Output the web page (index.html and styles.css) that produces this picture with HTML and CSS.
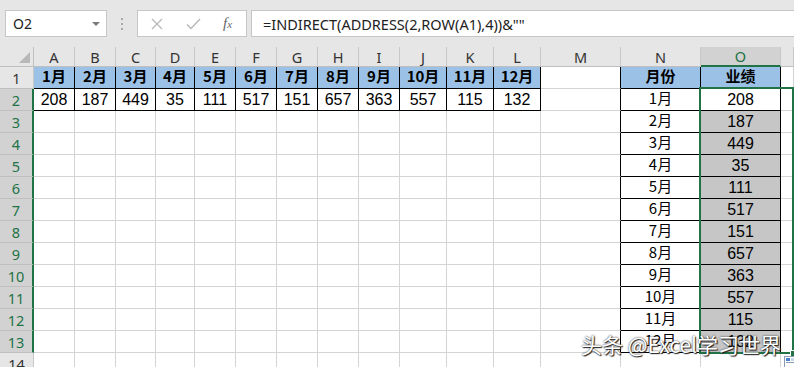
FILE: index.html
```html
<!DOCTYPE html>
<html lang="zh-CN">
<head>
    <meta charset="UTF-8">
    <meta name="viewport" content="width=device-width, initial-scale=1.0">
    <title>INDIRECT 行转列</title>
    <link rel="stylesheet" href="styles.css">
</head>
<body>
    <div class="toolbar">
        <div class="namebox"><span>O2</span><span class="arrow"></span></div>
        <div class="grip"><i></i><i></i><i></i></div>
        <div class="btns">
            <svg class="btn-x" width="12" height="12" viewBox="0 0 12 12"><path d="M1 1L11 11M11 1L1 11" stroke="#b8b8b8" stroke-width="1.3" fill="none"/></svg>
            <svg class="btn-ok" width="15" height="12" viewBox="0 0 15 12"><path d="M1 6.5L5 10.5L14 1" stroke="#b8b8b8" stroke-width="1.4" fill="none"/></svg>
            <span class="fx">f<small>x</small></span>
        </div>
        <div class="formula">=INDIRECT(ADDRESS(2,ROW(A1),4))&amp;""</div>
    </div>

    <div class="sheet">
        <!-- column headers -->
        <div class="corner"><span class="tri"></span></div>
        <div class="ch">A</div><div class="ch">B</div><div class="ch">C</div><div class="ch">D</div>
        <div class="ch">E</div><div class="ch">F</div><div class="ch">G</div><div class="ch">H</div>
        <div class="ch">I</div><div class="ch">J</div><div class="ch">K</div><div class="ch">L</div>
        <div class="ch">M</div><div class="ch">N</div><div class="ch sel">O</div><div class="ch"></div>

        <!-- row 1 -->
        <div class="rh">1</div>
        <div class="c b hd">1月</div><div class="c b hd">2月</div><div class="c b hd">3月</div><div class="c b hd">4月</div>
        <div class="c b hd">5月</div><div class="c b hd">6月</div><div class="c b hd">7月</div><div class="c b hd">8月</div>
        <div class="c b hd">9月</div><div class="c b hd">10月</div><div class="c b hd">11月</div><div class="c b hd">12月</div>
        <div class="c br"></div><div class="c b hd">月份</div><div class="c b hd">业绩</div><div class="c"></div>

        <!-- row 2 -->
        <div class="rh sel">2</div>
        <div class="c b">208</div><div class="c b">187</div><div class="c b">449</div><div class="c b">35</div>
        <div class="c b">111</div><div class="c b">517</div><div class="c b">151</div><div class="c b">657</div>
        <div class="c b">363</div><div class="c b">557</div><div class="c b">115</div><div class="c b">132</div>
        <div class="c br"></div><div class="c b lb">1月</div><div class="c b">208</div><div class="c"></div>

        <!-- rows 3-13 -->
        <div class="rh sel">3</div>
        <div class="c"></div><div class="c"></div><div class="c"></div><div class="c"></div><div class="c"></div><div class="c"></div>
        <div class="c"></div><div class="c"></div><div class="c"></div><div class="c"></div><div class="c"></div><div class="c"></div>
        <div class="c br"></div><div class="c b lb">2月</div><div class="c b g">187</div><div class="c"></div>

        <div class="rh sel">4</div>
        <div class="c"></div><div class="c"></div><div class="c"></div><div class="c"></div><div class="c"></div><div class="c"></div>
        <div class="c"></div><div class="c"></div><div class="c"></div><div class="c"></div><div class="c"></div><div class="c"></div>
        <div class="c br"></div><div class="c b lb">3月</div><div class="c b g">449</div><div class="c"></div>

        <div class="rh sel">5</div>
        <div class="c"></div><div class="c"></div><div class="c"></div><div class="c"></div><div class="c"></div><div class="c"></div>
        <div class="c"></div><div class="c"></div><div class="c"></div><div class="c"></div><div class="c"></div><div class="c"></div>
        <div class="c br"></div><div class="c b lb">4月</div><div class="c b g">35</div><div class="c"></div>

        <div class="rh sel">6</div>
        <div class="c"></div><div class="c"></div><div class="c"></div><div class="c"></div><div class="c"></div><div class="c"></div>
        <div class="c"></div><div class="c"></div><div class="c"></div><div class="c"></div><div class="c"></div><div class="c"></div>
        <div class="c br"></div><div class="c b lb">5月</div><div class="c b g">111</div><div class="c"></div>

        <div class="rh sel">7</div>
        <div class="c"></div><div class="c"></div><div class="c"></div><div class="c"></div><div class="c"></div><div class="c"></div>
        <div class="c"></div><div class="c"></div><div class="c"></div><div class="c"></div><div class="c"></div><div class="c"></div>
        <div class="c br"></div><div class="c b lb">6月</div><div class="c b g">517</div><div class="c"></div>

        <div class="rh sel">8</div>
        <div class="c"></div><div class="c"></div><div class="c"></div><div class="c"></div><div class="c"></div><div class="c"></div>
        <div class="c"></div><div class="c"></div><div class="c"></div><div class="c"></div><div class="c"></div><div class="c"></div>
        <div class="c br"></div><div class="c b lb">7月</div><div class="c b g">151</div><div class="c"></div>

        <div class="rh sel">9</div>
        <div class="c"></div><div class="c"></div><div class="c"></div><div class="c"></div><div class="c"></div><div class="c"></div>
        <div class="c"></div><div class="c"></div><div class="c"></div><div class="c"></div><div class="c"></div><div class="c"></div>
        <div class="c br"></div><div class="c b lb">8月</div><div class="c b g">657</div><div class="c"></div>

        <div class="rh sel">10</div>
        <div class="c"></div><div class="c"></div><div class="c"></div><div class="c"></div><div class="c"></div><div class="c"></div>
        <div class="c"></div><div class="c"></div><div class="c"></div><div class="c"></div><div class="c"></div><div class="c"></div>
        <div class="c br"></div><div class="c b lb">9月</div><div class="c b g">363</div><div class="c"></div>

        <div class="rh sel">11</div>
        <div class="c"></div><div class="c"></div><div class="c"></div><div class="c"></div><div class="c"></div><div class="c"></div>
        <div class="c"></div><div class="c"></div><div class="c"></div><div class="c"></div><div class="c"></div><div class="c"></div>
        <div class="c br"></div><div class="c b lb">10月</div><div class="c b g">557</div><div class="c"></div>

        <div class="rh sel">12</div>
        <div class="c"></div><div class="c"></div><div class="c"></div><div class="c"></div><div class="c"></div><div class="c"></div>
        <div class="c"></div><div class="c"></div><div class="c"></div><div class="c"></div><div class="c"></div><div class="c"></div>
        <div class="c br"></div><div class="c b lb">11月</div><div class="c b g">115</div><div class="c"></div>

        <div class="rh sel">13</div>
        <div class="c"></div><div class="c"></div><div class="c"></div><div class="c"></div><div class="c"></div><div class="c"></div>
        <div class="c"></div><div class="c"></div><div class="c"></div><div class="c"></div><div class="c"></div><div class="c"></div>
        <div class="c br"></div><div class="c b lb">12月</div><div class="c b g">132</div><div class="c"></div>

        <!-- row 14 -->
        <div class="rh">14</div>
        <div class="c"></div><div class="c"></div><div class="c"></div><div class="c"></div><div class="c"></div><div class="c"></div>
        <div class="c"></div><div class="c"></div><div class="c"></div><div class="c"></div><div class="c"></div><div class="c"></div>
        <div class="c"></div><div class="c"></div><div class="c"></div><div class="c"></div>

        <!-- selection O2:O13 -->
        <div class="selection"><span class="handle"></span></div>
    </div>

    <div class="mark">头条 @Excel学习世界</div>

    <svg class="qa" width="12" height="12" viewBox="0 0 12 12">
        <rect x="0.5" y="0.5" width="11" height="11" fill="#fff" stroke="#8a9bb5"/>
        <rect x="2" y="2" width="4" height="3" fill="#4a7fd0"/>
        <rect x="7" y="2" width="3" height="3" fill="#c9d6ea"/>
        <rect x="2" y="6" width="8" height="1" fill="#8a9bb5"/>
    </svg>
</body>
</html>
```

FILE: styles.css
```css
body {
    margin: 0;
    width: 794px;
    height: 367px;
    overflow: hidden;
    position: relative;
    background: #fff;
    font-family: "Liberation Sans", "Noto Sans CJK SC", sans-serif;
}

/* formula bar */
.toolbar {
    height: 47px;
    box-sizing: border-box;
    padding-top: 10px;
    background: #e6e6e6;
    display: flex;
    align-items: flex-start;
    font-family: "Noto Sans", sans-serif;
}
.namebox {
    margin-left: 5px;
    width: 102px;
    height: 27px;
    box-sizing: border-box;
    background: #fff;
    border: 1px solid #c6c6c6;
    display: flex;
    align-items: center;
    justify-content: space-between;
    padding: 0 6px 0 7px;
    font-size: 14px;
    color: #222;
}
.arrow {
    width: 0;
    height: 0;
    border-left: 4px solid transparent;
    border-right: 4px solid transparent;
    border-top: 4px solid #7a7a7a;
}
.grip {
    width: 30px;
    height: 27px;
    display: flex;
    flex-direction: column;
    align-items: center;
    justify-content: center;
    gap: 3px;
}
.grip i {
    width: 2px;
    height: 2px;
    background: #a8a8a8;
}
.btns {
    width: 110px;
    height: 27px;
    box-sizing: border-box;
    background: #fff;
    border: 1px solid #c6c6c6;
    display: flex;
    align-items: center;
    padding-left: 13px;
}
.btn-x { margin-right: 23px; }
.btn-ok { margin-right: 22px; }
.fx {
    font-family: "Liberation Serif", serif;
    font-style: italic;
    font-size: 15px;
    color: #666;
}
.fx small { font-size: 11px; }
.formula {
    flex: 1;
    margin-left: 4px;
    margin-right: -2px;
    height: 27px;
    box-sizing: border-box;
    background: #fff;
    border: 1px solid #c6c6c6;
    padding: 3px 0 0 11px;
    font-size: 14.5px;
    color: #222;
}

/* grid */
.sheet {
    position: relative;
    display: grid;
    grid-template-columns: 34px 41px 41px 40px 39px 41px 41px 41px 41px 41px 47px 47px 47px 80px 80px 80px 1fr;
    grid-template-rows: 20px repeat(14, 22px);
}
.sheet > div {
    box-sizing: border-box;
    display: flex;
    align-items: center;
    justify-content: center;
}
.corner {
    background: #e6e6e6;
    border-right: 1px solid #bfbfbf;
    border-bottom: 1px solid #bfbfbf;
    position: relative;
}
.tri {
    position: absolute;
    right: 3px;
    bottom: 3px;
    width: 0;
    height: 0;
    border-left: 11px solid transparent;
    border-bottom: 11px solid #b8b8b8;
}
.ch, .rh {
    background: #e6e6e6;
    border-right: 1px solid #c8c8c8;
    border-bottom: 1px solid #bfbfbf;
    font-family: "Noto Sans", sans-serif;
    font-size: 14.5px;
    color: #333;
}
.ch.sel {
    background: #d2d2d2;
    color: #217346;
    border-bottom: 2px solid #217346;
}
.rh.sel {
    background: #d2d2d2;
    color: #217346;
    border-right: 2px solid #217346;
}
.c {
    border-right: 1px solid #d4d4d4;
    border-bottom: 1px solid #d4d4d4;
    font-size: 16px;
    color: #000;
}
.b {
    border-right-color: #000;
    border-bottom-color: #000;
}
.br { border-right-color: #000; }
.sheet > .hd, .sheet > .lb {
    font-family: "Noto Sans CJK SC", sans-serif;
    font-size: 15px;
    line-height: 1;
    padding-bottom: 4px;
}
.hd {
    background: #9bc2e6;
    font-weight: bold;
}
.g { background: #c6c6c6; }

/* absolutely placed over grid area O2:O13, so it stays out of auto-placement */
.sheet > .selection {
    position: absolute;
    grid-column: 16;
    grid-row: 3 / 15;
    top: -2px;
    left: -2px;
    right: 0;
    bottom: -1px;
    border: 2px solid #217346;
}
.handle {
    position: absolute;
    right: -5px;
    bottom: -5px;
    width: 5px;
    height: 5px;
    background: #217346;
    border: 1px solid #fff;
}

/* watermark */
.mark {
    position: absolute;
    left: 581px;
    top: 329px;
    font-family: "Noto Sans CJK SC", sans-serif;
    font-size: 21px;
    color: #fff;
    text-shadow: 0 0 2px #222, 1px 1px 1px #222;
    white-space: nowrap;
}
.qa {
    position: absolute;
    left: 784px;
    top: 356px;
}
```
